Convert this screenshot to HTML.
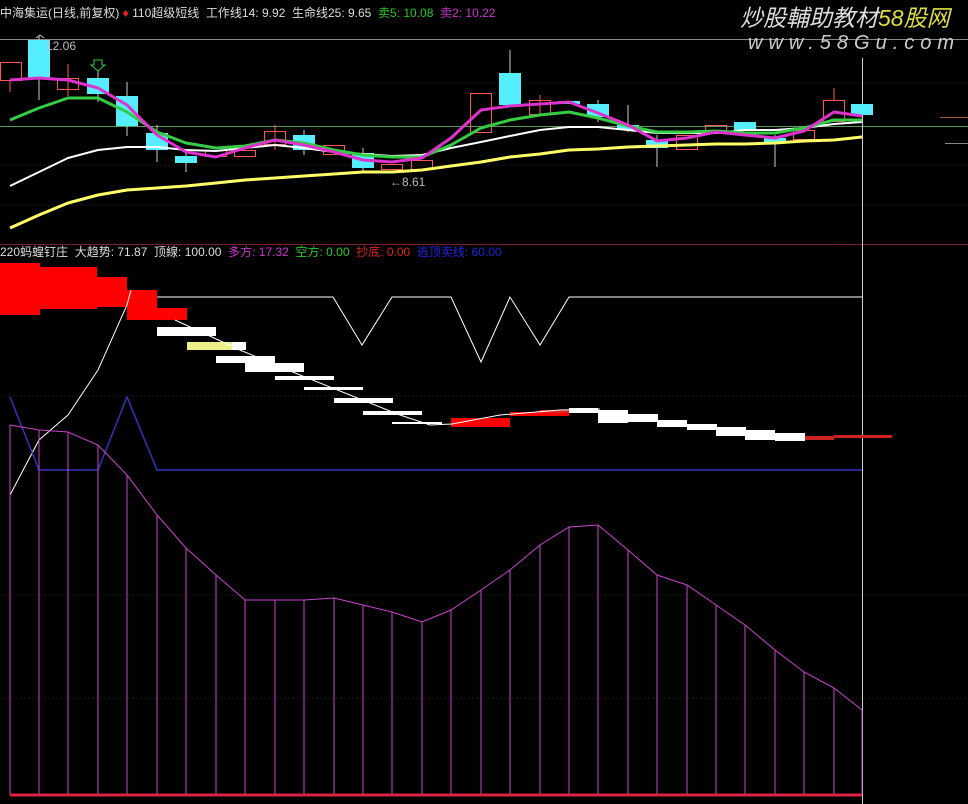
<!DOCTYPE html>
<html><head><meta charset="utf-8"><style>
html,body{margin:0;padding:0;background:#000;}
body{width:968px;height:804px;overflow:hidden;position:relative;font-family:"Liberation Sans","Noto Sans CJK SC",sans-serif;}
.t{position:absolute;font-size:12px;white-space:nowrap;line-height:14px;}
</style></head><body>
<svg width="968" height="804" style="position:absolute;left:0;top:0" xmlns="http://www.w3.org/2000/svg">
<!-- grid -->
<g stroke="#1a1a1a" stroke-width="1" stroke-dasharray="2,2">
<line x1="0" y1="83" x2="968" y2="83"/><line x1="0" y1="165" x2="968" y2="165"/><line x1="0" y1="205" x2="968" y2="205"/>
<line x1="0" y1="396" x2="968" y2="396"/><line x1="0" y1="595" x2="968" y2="595"/><line x1="0" y1="698" x2="968" y2="698"/>
</g>
<line x1="0" y1="39.5" x2="968" y2="39.5" stroke="#8a8a8a"/>
<line x1="0" y1="126.5" x2="968" y2="126.5" stroke="#5a9a5a"/>
<line x1="0" y1="244.5" x2="968" y2="244.5" stroke="#7a2030"/>
<line x1="862.5" y1="58" x2="862.5" y2="804" stroke="#cccccc"/>
<line x1="940" y1="117.5" x2="968" y2="117.5" stroke="#aa5533"/>
<line x1="945" y1="143.5" x2="968" y2="143.5" stroke="#888"/>
<!-- candles -->
<g stroke="#ff5555" fill="none" stroke-width="1">
<rect x="0.5" y="62.5" width="21" height="18"/><line x1="10" y1="80" x2="10" y2="92"/>
<rect x="57.5" y="78.5" width="21" height="11"/><line x1="68" y1="64" x2="68" y2="96"/>
<rect x="205.5" y="150.5" width="21" height="6"/><rect x="234.5" y="150.5" width="21" height="6"/>
<rect x="264.5" y="131.5" width="21" height="13"/><line x1="275" y1="125" x2="275" y2="150"/>
<rect x="323.5" y="145.5" width="21" height="9"/><rect x="381.5" y="164.5" width="21" height="5"/>
<rect x="411.5" y="160.5" width="21" height="9"/>
<rect x="470.5" y="93.5" width="21" height="39"/>
<rect x="529.5" y="100.5" width="21" height="14"/><line x1="540" y1="95" x2="540" y2="115"/>
<rect x="676.5" y="135.5" width="21" height="14"/><rect x="705.5" y="125.5" width="21" height="5"/>
<rect x="793.5" y="130.5" width="21" height="9"/>
<rect x="823.5" y="100.5" width="21" height="21"/><line x1="834" y1="88" x2="834" y2="100"/>
</g>
<g stroke="#cccccc" stroke-width="1">
<line x1="39" y1="36" x2="39" y2="100"/><line x1="98" y1="70" x2="98" y2="102"/><line x1="127" y1="82" x2="127" y2="136"/>
<line x1="157" y1="125" x2="157" y2="162"/><line x1="186" y1="150" x2="186" y2="172"/><line x1="304" y1="130" x2="304" y2="155"/>
<line x1="363" y1="148" x2="363" y2="173"/><line x1="510" y1="50" x2="510" y2="106"/><line x1="598" y1="100" x2="598" y2="122"/>
<line x1="657" y1="135" x2="657" y2="167"/><line x1="775" y1="135" x2="775" y2="167"/><line x1="628" y1="105" x2="628" y2="132"/>
</g>
<g fill="#55eeff">
<rect x="28" y="40" width="22" height="38"/><rect x="87" y="78" width="22" height="16"/><rect x="116" y="96" width="22" height="30"/>
<rect x="146" y="133" width="22" height="17"/><rect x="175" y="156" width="22" height="7"/><rect x="293" y="135" width="22" height="15"/>
<rect x="352" y="153" width="22" height="15"/><rect x="499" y="73" width="22" height="32"/><rect x="558" y="101" width="22" height="3"/>
<rect x="587" y="104" width="22" height="13"/><rect x="617" y="125" width="22" height="5"/><rect x="646" y="140" width="22" height="8"/>
<rect x="734" y="122" width="22" height="9"/><rect x="764" y="138" width="22" height="5"/><rect x="851" y="104" width="22" height="11"/>
</g>
<path d="M94 60 h8 v5 h3 l-7 6 l-7 -6 h3z" fill="none" stroke="#33cc33"/>
<!-- MAs -->
<g fill="none" stroke-width="3" stroke-linejoin="round">
<polyline stroke="#ffff66" points="10,228 39,215 68,203 98,195 127,190 157,188 186,186 216,183 245,180 275,178 304,176 334,174 363,172 392,172 422,170 451,166 481,162 510,157 540,154 569,150 598,149 628,147 657,146 687,145 716,144 745,144 775,143 804,141 834,140 862,137"/>
<polyline stroke="#ffffff" stroke-width="2" points="10,186 39,172 68,158 98,150 127,147 157,147 186,150 216,151 245,148 275,145 304,148 334,152 363,154 392,156 422,155 451,148 481,142 510,136 540,130 569,127 598,127 628,130 657,133 687,133 716,133 745,130 775,130 804,128 834,124 862,122"/>
<polyline stroke="#33cc44" points="10,120 39,108 68,98 98,98 127,112 157,132 186,143 216,148 245,146 275,140 304,143 334,150 363,155 392,157 422,157 451,145 481,128 510,120 540,115 569,112 598,118 628,126 657,132 687,132 716,131 745,133 775,133 804,128 834,120 862,120"/>
<polyline stroke="#dd33cc" points="10,80 39,78 68,80 98,88 127,105 157,135 186,152 216,157 245,148 275,140 304,145 334,152 363,160 392,162 422,158 451,138 481,110 510,106 540,104 569,102 598,113 628,125 657,141 687,138 716,132 745,135 775,138 804,131 834,112 862,116"/>
</g>
<!-- lower pane -->
<g fill="#ff0000">
<rect x="0" y="263" width="40" height="52"/><rect x="40" y="267" width="57" height="42"/><rect x="97" y="277" width="30" height="30"/>
<rect x="127" y="290" width="30" height="30"/><rect x="157" y="308" width="30" height="12"/>
<rect x="451" y="418" width="59" height="9"/><rect x="510" y="412" width="59" height="4"/><rect x="540" y="410" width="30" height="3" fill="#dd2222"/>
<rect x="804" y="436" width="30" height="4" fill="#cc2222"/><rect x="834" y="435" width="58" height="3" fill="#cc2222"/>
</g>
<g fill="#ffffff">
<rect x="157" y="327" width="59" height="9"/><rect x="187" y="342" width="59" height="8"/><rect x="216" y="356" width="59" height="7"/>
<rect x="245" y="363" width="59" height="9"/><rect x="275" y="376" width="59" height="4"/><rect x="304" y="387" width="59" height="3"/>
<rect x="334" y="398" width="59" height="5"/><rect x="363" y="411" width="59" height="4"/><rect x="392" y="422" width="50" height="2"/>
<rect x="569" y="408" width="29" height="5"/><rect x="598" y="410" width="30" height="13"/><rect x="628" y="414" width="30" height="8"/>
<rect x="657" y="420" width="30" height="7"/><rect x="687" y="424" width="30" height="6"/><rect x="716" y="427" width="30" height="9"/>
<rect x="745" y="430" width="30" height="10"/><rect x="775" y="433" width="30" height="8"/>
</g>
<rect x="187" y="342" width="45" height="8" fill="#eeee88"/>
<polyline fill="none" stroke="#ffffff" stroke-width="1" points="157,297 333,297 362,345 392,297 451,297 481,362 510,297 540,345 569,297 862,297"/>
<polyline fill="none" stroke="#ffffff" stroke-width="1" points="10,495 39,440 68,415 98,370 127,305 131,290"/>
<polyline fill="none" stroke="#ffffff" stroke-width="1" points="175,320 240,350 300,375 400,415 430,425 452,424 500,415 560,410 600,409"/>
<polyline fill="none" stroke="#3333bb" stroke-width="1.5" points="10,397 39,470 98,470 127,397 157,470 862,470"/>
<g stroke="#cc44cc" stroke-width="1">
<polyline fill="none" points="10,425 39,430 68,432 98,445 127,475 157,515 186,548 216,575 245,600 275,600 304,600 334,598 363,605 392,612 422,622 451,610 481,590 510,570 540,545 569,527 598,525 628,550 657,575 687,585 716,605 745,625 775,650 804,672 834,688 862,710"/>
<line x1="10" y1="425" x2="10" y2="795"/><line x1="39" y1="430" x2="39" y2="795"/><line x1="68" y1="432" x2="68" y2="795"/><line x1="98" y1="445" x2="98" y2="795"/>
<line x1="127" y1="475" x2="127" y2="795"/><line x1="157" y1="515" x2="157" y2="795"/><line x1="186" y1="548" x2="186" y2="795"/><line x1="216" y1="575" x2="216" y2="795"/>
<line x1="245" y1="600" x2="245" y2="795"/><line x1="275" y1="600" x2="275" y2="795"/><line x1="304" y1="600" x2="304" y2="795"/><line x1="334" y1="598" x2="334" y2="795"/>
<line x1="363" y1="605" x2="363" y2="795"/><line x1="392" y1="612" x2="392" y2="795"/><line x1="422" y1="622" x2="422" y2="795"/><line x1="451" y1="610" x2="451" y2="795"/>
<line x1="481" y1="590" x2="481" y2="795"/><line x1="510" y1="570" x2="510" y2="795"/><line x1="540" y1="545" x2="540" y2="795"/><line x1="569" y1="527" x2="569" y2="795"/>
<line x1="598" y1="525" x2="598" y2="795"/><line x1="628" y1="550" x2="628" y2="795"/><line x1="657" y1="575" x2="657" y2="795"/><line x1="687" y1="585" x2="687" y2="795"/>
<line x1="716" y1="605" x2="716" y2="795"/><line x1="745" y1="625" x2="745" y2="795"/><line x1="775" y1="650" x2="775" y2="795"/><line x1="804" y1="672" x2="804" y2="795"/>
<line x1="834" y1="688" x2="834" y2="795"/><line x1="862" y1="710" x2="862" y2="795"/>
</g>
<line x1="10" y1="795" x2="862" y2="795" stroke="#dd2244" stroke-width="3"/>
<path d="M36 38 l4 -3 l4 3" fill="none" stroke="#bbb"/>
</svg>
<div class="t" style="left:0;top:6px;color:#ddd">中海集运(日线,前复权) <span style="color:#ee2222">♦</span> 110超级短线&nbsp; 工作线14: 9.92&nbsp; 生命线25: 9.65&nbsp; <span style="color:#22cc22">卖5: 10.08</span>&nbsp; <span style="color:#cc33cc">卖2: 10.22</span></div>
<div class="t" style="left:46px;top:39px;color:#bbb">12.06</div>
<div class="t" style="left:390px;top:175px;color:#bbb">←8.61</div>
<div class="t" style="left:0;top:245px;color:#ddd">220蚂蝗钉庄&nbsp; 大趋势: 71.87&nbsp; 顶線: 100.00&nbsp; <span style="color:#cc33cc">多方: 17.32</span>&nbsp; <span style="color:#22cc22">空方: 0.00</span>&nbsp; <span style="color:#dd2222">抄底: 0.00</span>&nbsp; <span style="color:#2222dd">逃顶卖线: 60.00</span></div>
<div class="t" style="left:740px;top:4px;font-size:23px;line-height:28px;font-style:italic;color:#ddd">炒股輔助教材<span style="color:#dddd44">58股网</span></div>
<div class="t" style="left:748px;top:32px;font-size:20px;line-height:22px;font-style:italic;color:#ccc;letter-spacing:6px">www.58Gu.com</div>
</body></html>
